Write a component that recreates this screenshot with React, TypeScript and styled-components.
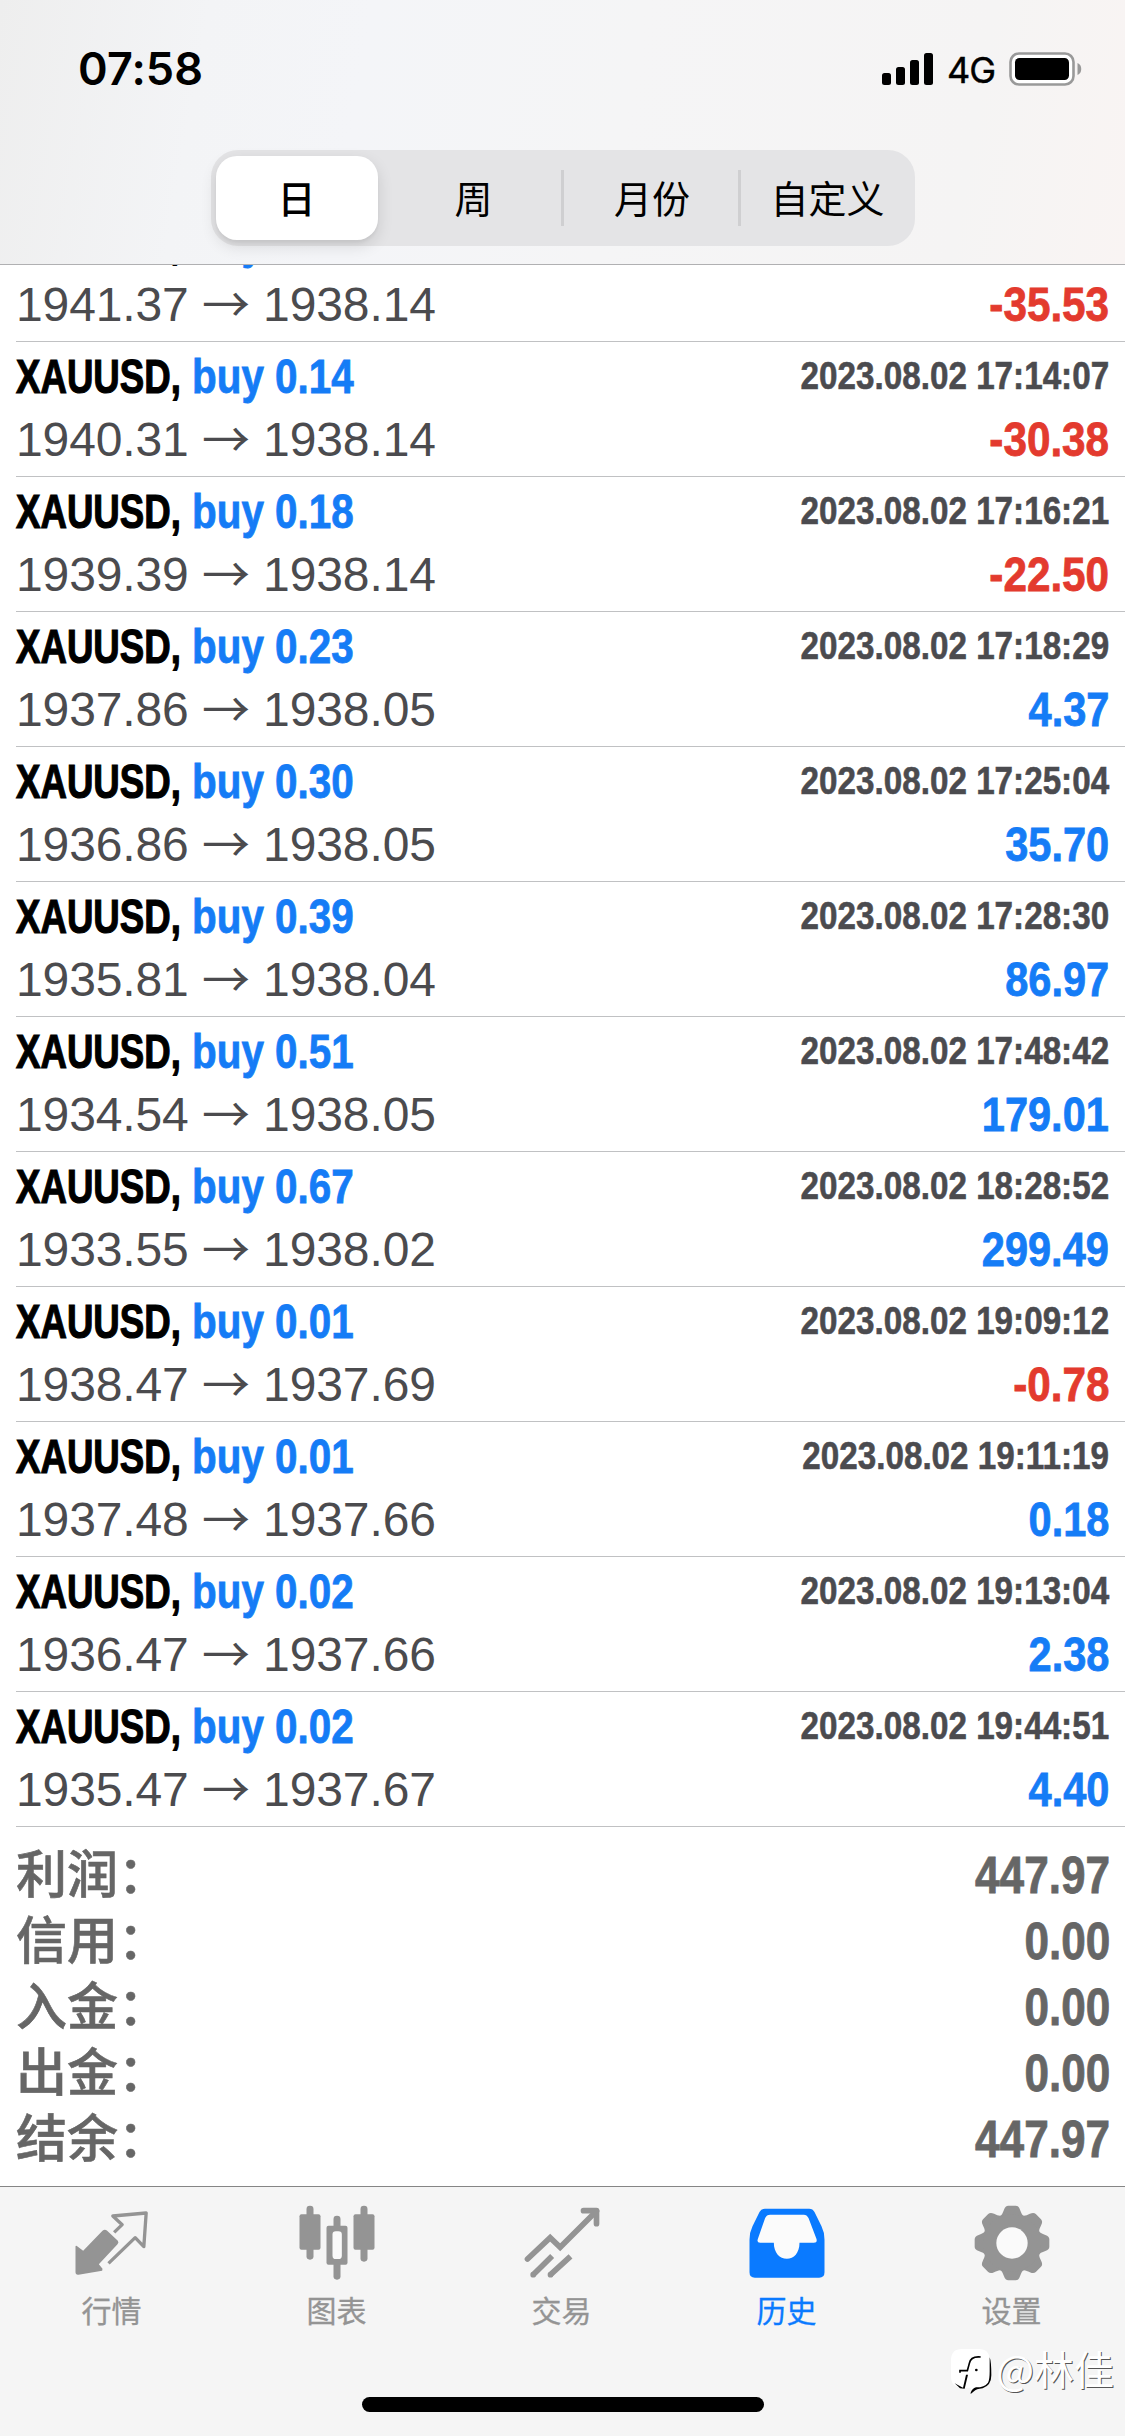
import React from "react";
import styled, { createGlobalStyle } from "styled-components";

const latin = `"Liberation Sans", Arial, "Noto Sans CJK SC", sans-serif`;
const cjk = `"Noto Sans CJK SC", sans-serif`;
const BLUE = "#157cf6";
const RED = "#e33a2e";

const Global = createGlobalStyle`
  * { box-sizing: border-box; }
  body { margin: 0; background: #fff; font-family: ${latin}; }
`;

const Screen = styled.div`
  width: 1125px;
  height: 2436px;
  display: flex;
  flex-direction: column;
  overflow: hidden;
  background: #fff;
`;

const Header = styled.header`
  height: 265px;
  flex: none;
  border-bottom: 1px solid #b0b0b2;
  background: linear-gradient(100deg, #eeeeee 0%, #f3f4f6 18%, #f4f5f8 32%, #f5f5f6 55%, #f5f4f4 85%, #f9f4f3 100%);
`;

const StatusBar = styled.div`
  height: 150px;
  padding: 0 42px 12px 78px;
  display: flex;
  align-items: center;
  justify-content: space-between;
`;

const Clock = styled.span`
  font: 600 45px/54px Inter, sans-serif;
  letter-spacing: 0.1px;
  color: #000;
`;

const StatusIcons = styled.div`
  display: flex;
  align-items: center;
`;

const Network = styled.span`
  font: 400 36px/40px Inter, sans-serif;
  -webkit-text-stroke: 0.4px currentColor;
  letter-spacing: -1px;
  margin: 2px 14px 0 13px;
`;

const Segments = styled.div`
  width: 704px;
  height: 96px;
  margin: 0 auto;
  padding: 6px 0 6px 5px;
  display: grid;
  grid-template-columns: 162px 186px 177px 174px;
  align-items: center;
  border-radius: 27px;
  background: #e4e4e6;
`;

const Segment = styled.div<{ $active?: boolean; $divided?: boolean; $inset?: number }>`
  height: ${(p) => (p.$active ? 84 : 56)}px;
  padding: 0 0 3px ${(p) => p.$inset ?? 0}px;
  display: flex;
  align-items: center;
  justify-content: center;
  font: ${(p) => (p.$active ? 500 : 400)} 38px/53px ${cjk};
  color: #000;
  background: ${(p) => (p.$active ? "#fff" : "transparent")};
  border-radius: ${(p) => (p.$active ? "21px" : "0")};
  box-shadow: ${(p) => (p.$active ? "0 6px 16px rgba(0,0,0,.12), 0 3px 3px rgba(0,0,0,.04)" : "none")};
  border-right: ${(p) => (p.$divided ? "3px solid #cfcfd1" : "none")};
`;

const List = styled.main`
  flex: 1;
  min-height: 0;
  overflow: hidden;
`;

const Deals = styled.div`
  margin-top: -58px;
`;

const Deal = styled.article`
  height: 135px;
  margin-left: 16px;
  padding: 5px 16px 0 0;
  display: flex;
  flex-direction: column;
  gap: 3px;
  border-bottom: 1px solid #c0c1c3;
`;

const Line = styled.div`
  height: 60px;
  line-height: 60px;
  display: flex;
  justify-content: space-between;
`;

const Title = styled.div`
  display: flex;
`;

const Symbol = styled.span`
  width: 176px;
  font-size: 48px;
  font-weight: 700;
  color: #000;
  -webkit-text-stroke: 1.2px currentColor;
  transform: scaleX(0.763);
  transform-origin: left;
  white-space: nowrap;
`;

const Side = styled.span`
  font-size: 48px;
  font-weight: 700;
  color: ${BLUE};
  -webkit-text-stroke: 0.8px currentColor;
  transform: scaleX(0.842);
  transform-origin: left;
  white-space: nowrap;
`;

const Time = styled.time`
  height: 58px;
  line-height: 58px;
  font-size: 39px;
  font-weight: 700;
  color: #4b4b4f;
  -webkit-text-stroke: 0.6px currentColor;
  transform: scaleX(0.852);
  transform-origin: right;
`;

const Prices = styled.span`
  font-size: 48px;
  letter-spacing: -0.12px;
  color: #4b4b4e;
  white-space: nowrap;
`;

const Arrow = styled.span`
  display: inline-block;
  width: 48px;
  height: 60px;
  line-height: 53px;
  vertical-align: top;
  font-family: ${cjk};
`;

const Amount = styled.span<{ $loss: boolean }>`
  font-size: 48px;
  font-weight: 700;
  color: ${(p) => (p.$loss ? RED : BLUE)};
  -webkit-text-stroke: 0.8px currentColor;
  transform: scaleX(${(p) => (p.$loss ? 0.88 : 0.865)});
  transform-origin: right;
`;

const Summary = styled.section`
  padding: 11px 15px 0 16px;
`;

const SummaryRow = styled.div`
  height: 66px;
  display: flex;
  justify-content: space-between;
  align-items: baseline;
  font-size: 51px;
  line-height: 66px;
  color: #666;
`;

const SummaryLabel = styled.span`
  font-family: ${cjk};
  font-weight: 500;
  -webkit-text-stroke: 0.6px currentColor;
`;

const SummaryValue = styled.span`
  font-weight: 700;
  -webkit-text-stroke: 0.8px currentColor;
  transform: scaleX(0.865);
  transform-origin: right;
`;

const Footer = styled.footer`
  position: relative;
  flex: none;
  height: 250px;
  border-top: 1px solid #858585;
  background: #f5f5f5;
  display: flex;
  flex-direction: column;
  align-items: center;
`;

const Tabs = styled.nav`
  width: 1125px;
  height: 210px;
  padding: 16px 1px 0 0;
  margin-left: -2px;
  display: grid;
  grid-template-columns: repeat(5, 225px);
`;

const Tab = styled.div<{ $active?: boolean }>`
  display: flex;
  flex-direction: column;
  align-items: center;
  gap: 4px;
  color: ${(p) => (p.$active ? "#0a7aff" : "#949494")};
  font: 400 30px/44px ${cjk};
  -webkit-text-stroke: 0.3px currentColor;
`;

const HomeBar = styled.div`
  width: 402px;
  height: 15px;
  border-radius: 8px;
  background: #000;
`;

const Watermark = styled.div`
  position: absolute;
  right: 11px;
  bottom: 35px;
  display: flex;
  align-items: center;
  gap: 4px;
`;

const Author = styled.span`
  padding-bottom: 8px;
  font: 400 40px/50px ${cjk};
  color: #fff;
  text-shadow: 1px 1px 0 #555;
`;

const deals: [string, string, string, string, string][] = [
  ["0.11", "2023.08.02 17:12:30", "1941.37", "1938.14", "-35.53"],
  ["0.14", "2023.08.02 17:14:07", "1940.31", "1938.14", "-30.38"],
  ["0.18", "2023.08.02 17:16:21", "1939.39", "1938.14", "-22.50"],
  ["0.23", "2023.08.02 17:18:29", "1937.86", "1938.05", "4.37"],
  ["0.30", "2023.08.02 17:25:04", "1936.86", "1938.05", "35.70"],
  ["0.39", "2023.08.02 17:28:30", "1935.81", "1938.04", "86.97"],
  ["0.51", "2023.08.02 17:48:42", "1934.54", "1938.05", "179.01"],
  ["0.67", "2023.08.02 18:28:52", "1933.55", "1938.02", "299.49"],
  ["0.01", "2023.08.02 19:09:12", "1938.47", "1937.69", "-0.78"],
  ["0.01", "2023.08.02 19:11:19", "1937.48", "1937.66", "0.18"],
  ["0.02", "2023.08.02 19:13:04", "1936.47", "1937.66", "2.38"],
  ["0.02", "2023.08.02 19:44:51", "1935.47", "1937.67", "4.40"],
];

const totals: [string, string][] = [
  ["利润：", "447.97"],
  ["信用：", "0.00"],
  ["入金：", "0.00"],
  ["出金：", "0.00"],
  ["结余：", "447.97"],
];

const SignalIcon = () => (
  <svg width="52" height="34" viewBox="0 0 52 34">
    <rect x="0" y="21" width="9" height="12" rx="2.5" />
    <rect x="14" y="15" width="9" height="18" rx="2.5" />
    <rect x="28" y="8" width="9" height="25" rx="2.5" />
    <rect x="42" y="1" width="9" height="32" rx="2.5" />
  </svg>
);

const BatteryIcon = () => (
  <svg width="74" height="34" viewBox="0 0 74 34">
    <rect x="1.5" y="1.5" width="63" height="31" rx="8.5" fill="#fff" stroke="#999" strokeWidth="2.6" />
    <rect x="6" y="6" width="54" height="22" rx="4.5" />
    <path d="M68.5 11c5 1.500 5 10.500 0 12z" fill="#999" />
  </svg>
);

const QuotesIcon = () => (
  <svg width="80" height="80" viewBox="214.500 100 240 240">
    <path
      d="M229 229 248 243 306 183Q313 177 320 183L352 213Q356 218 351 224L295 284 306 297 305 303 234 315Q225 316 225 307V231Q225 227 229 229Z"
      fill="currentColor"
    />
    <path d="M341 188 365 165 337 139 437 130 430 231 404 204 324 281" fill="none" stroke="currentColor" strokeWidth="10" strokeLinejoin="round" />
  </svg>
);

const ChartIcon = () => (
  <svg width="80" height="80" viewBox="889.500 100 240 240" fill="currentColor">
    <rect x="918" y="108" width="21" height="162" rx="10" />
    <rect x="897" y="134" width="63" height="106" rx="6" />
    <rect x="1080" y="108" width="21" height="168" rx="10" />
    <rect x="1059" y="134" width="63" height="106" rx="6" />
    <rect x="999" y="138" width="21" height="60" rx="10" />
    <rect x="999" y="260" width="21" height="70" rx="10" />
    <rect x="978" y="168" width="63" height="117" rx="6" />
    <rect x="996" y="185" width="28" height="83" rx="10" fill="#fafafa" />
  </svg>
);

const TradeIcon = () => (
  <svg width="80" height="80" viewBox="364.500 100 240 240" fill="none" stroke="currentColor" strokeWidth="17">
    <path d="M381 268 449 204 479 233 588 124" strokeLinecap="round" />
    <path d="M549 123H588V162" strokeLinecap="round" strokeLinejoin="round" />
    <path d="M398 315 455 259M450 315 510 260" />
    <circle cx="398" cy="315" r="8.500" fill="currentColor" stroke="none" />
    <circle cx="450" cy="315" r="8.500" fill="currentColor" stroke="none" />
  </svg>
);

const HistoryIcon = () => (
  <svg width="80" height="80" viewBox="64.500 100 240 240">
    <path d="M118 117H251Q262 117 267 127L288 170Q297 188 297 210V308Q297 324 281 324H88Q72 324 72 308V210Q72 188 81 170L102 127Q107 117 118 117Z" fill="currentColor" />
    <path d="M134 135H235Q244 135 249 145L273 208Q276 219 265 219H222C222 250 205 267 184 267S145 250 145 219H104Q93 219 97 208L119 145Q123 135 134 135Z" fill="#fbfbfb" />
  </svg>
);

const SettingsIcon = () => (
  <svg width="80" height="80" viewBox="-120 -120 240 240">
    {[0, 45, 90, 135, 180, 225, 270, 315].map((a) => (
      <path
        key={a}
        transform={`rotate(${a})`}
        d="M-38 -80C-30 -82 -28 -90 -24 -100Q-20 -112 -11 -112H11Q20 -112 24 -100C28 -90 30 -82 38 -80L0 -40Z"
        fill="currentColor"
      />
    ))}
    <circle r="86" fill="currentColor" />
    <circle r="47" fill="#fafafa" />
  </svg>
);

const BrandMark = () => (
  <svg width="42" height="48" viewBox="0 0 126 144">
    <path d="M36 3H86Q119 3 119 37V82Q119 118 84 119 78 128 64 134L62 119H36Q3 119 3 85V37Q3 3 36 3Z" fill="#fff" />
    <path d="M92 27Q62 24 58 46 56 54 52 68H30V74" fill="none" stroke="#000" strokeWidth="5" />
    <path d="M48 80 39 119 14 106 30 121 44 122 54 80Z" />
    <path d="M119 28Q124 40 124 82 124 112 98 121 78 123 72 130L62 138V134Q66 122 78 118 104 118 114 104 119 96 119 70Z" />
    <circle cx="79" cy="66" r="4" />
  </svg>
);

const tabs = [
  { label: "行情", Icon: QuotesIcon },
  { label: "图表", Icon: ChartIcon },
  { label: "交易", Icon: TradeIcon },
  { label: "历史", Icon: HistoryIcon, active: true },
  { label: "设置", Icon: SettingsIcon },
];

export default function App() {
  return (
    <Screen>
      <Global />
      <Header>
        <StatusBar>
          <Clock>07:58</Clock>
          <StatusIcons>
            <SignalIcon />
            <Network>4G</Network>
            <BatteryIcon />
          </StatusIcons>
        </StatusBar>
        <Segments>
          <Segment $active>日</Segment>
          <Segment $divided $inset={9}>周</Segment>
          <Segment $divided $inset={3}>月份</Segment>
          <Segment>自定义</Segment>
        </Segments>
      </Header>
      <List>
        <Deals>
          {deals.map(([lot, time, open, close, profit]) => (
            <Deal key={time}>
              <Line>
                <Title>
                  <Symbol>XAUUSD,</Symbol>
                  <Side>buy {lot}</Side>
                </Title>
                <Time>{time}</Time>
              </Line>
              <Line>
                <Prices>
                  {open} <Arrow>→</Arrow> {close}
                </Prices>
                <Amount $loss={profit.startsWith("-")}>{profit}</Amount>
              </Line>
            </Deal>
          ))}
        </Deals>
        <Summary>
          {totals.map(([label, value]) => (
            <SummaryRow key={label}>
              <SummaryLabel>{label}</SummaryLabel>
              <SummaryValue>{value}</SummaryValue>
            </SummaryRow>
          ))}
        </Summary>
      </List>
      <Footer>
        <Tabs>
          {tabs.map(({ label, Icon, active }) => (
            <Tab key={label} $active={active}>
              <Icon />
              {label}
            </Tab>
          ))}
        </Tabs>
        <HomeBar />
        <Watermark>
          <BrandMark />
          <Author>@林佳</Author>
        </Watermark>
      </Footer>
    </Screen>
  );
}
